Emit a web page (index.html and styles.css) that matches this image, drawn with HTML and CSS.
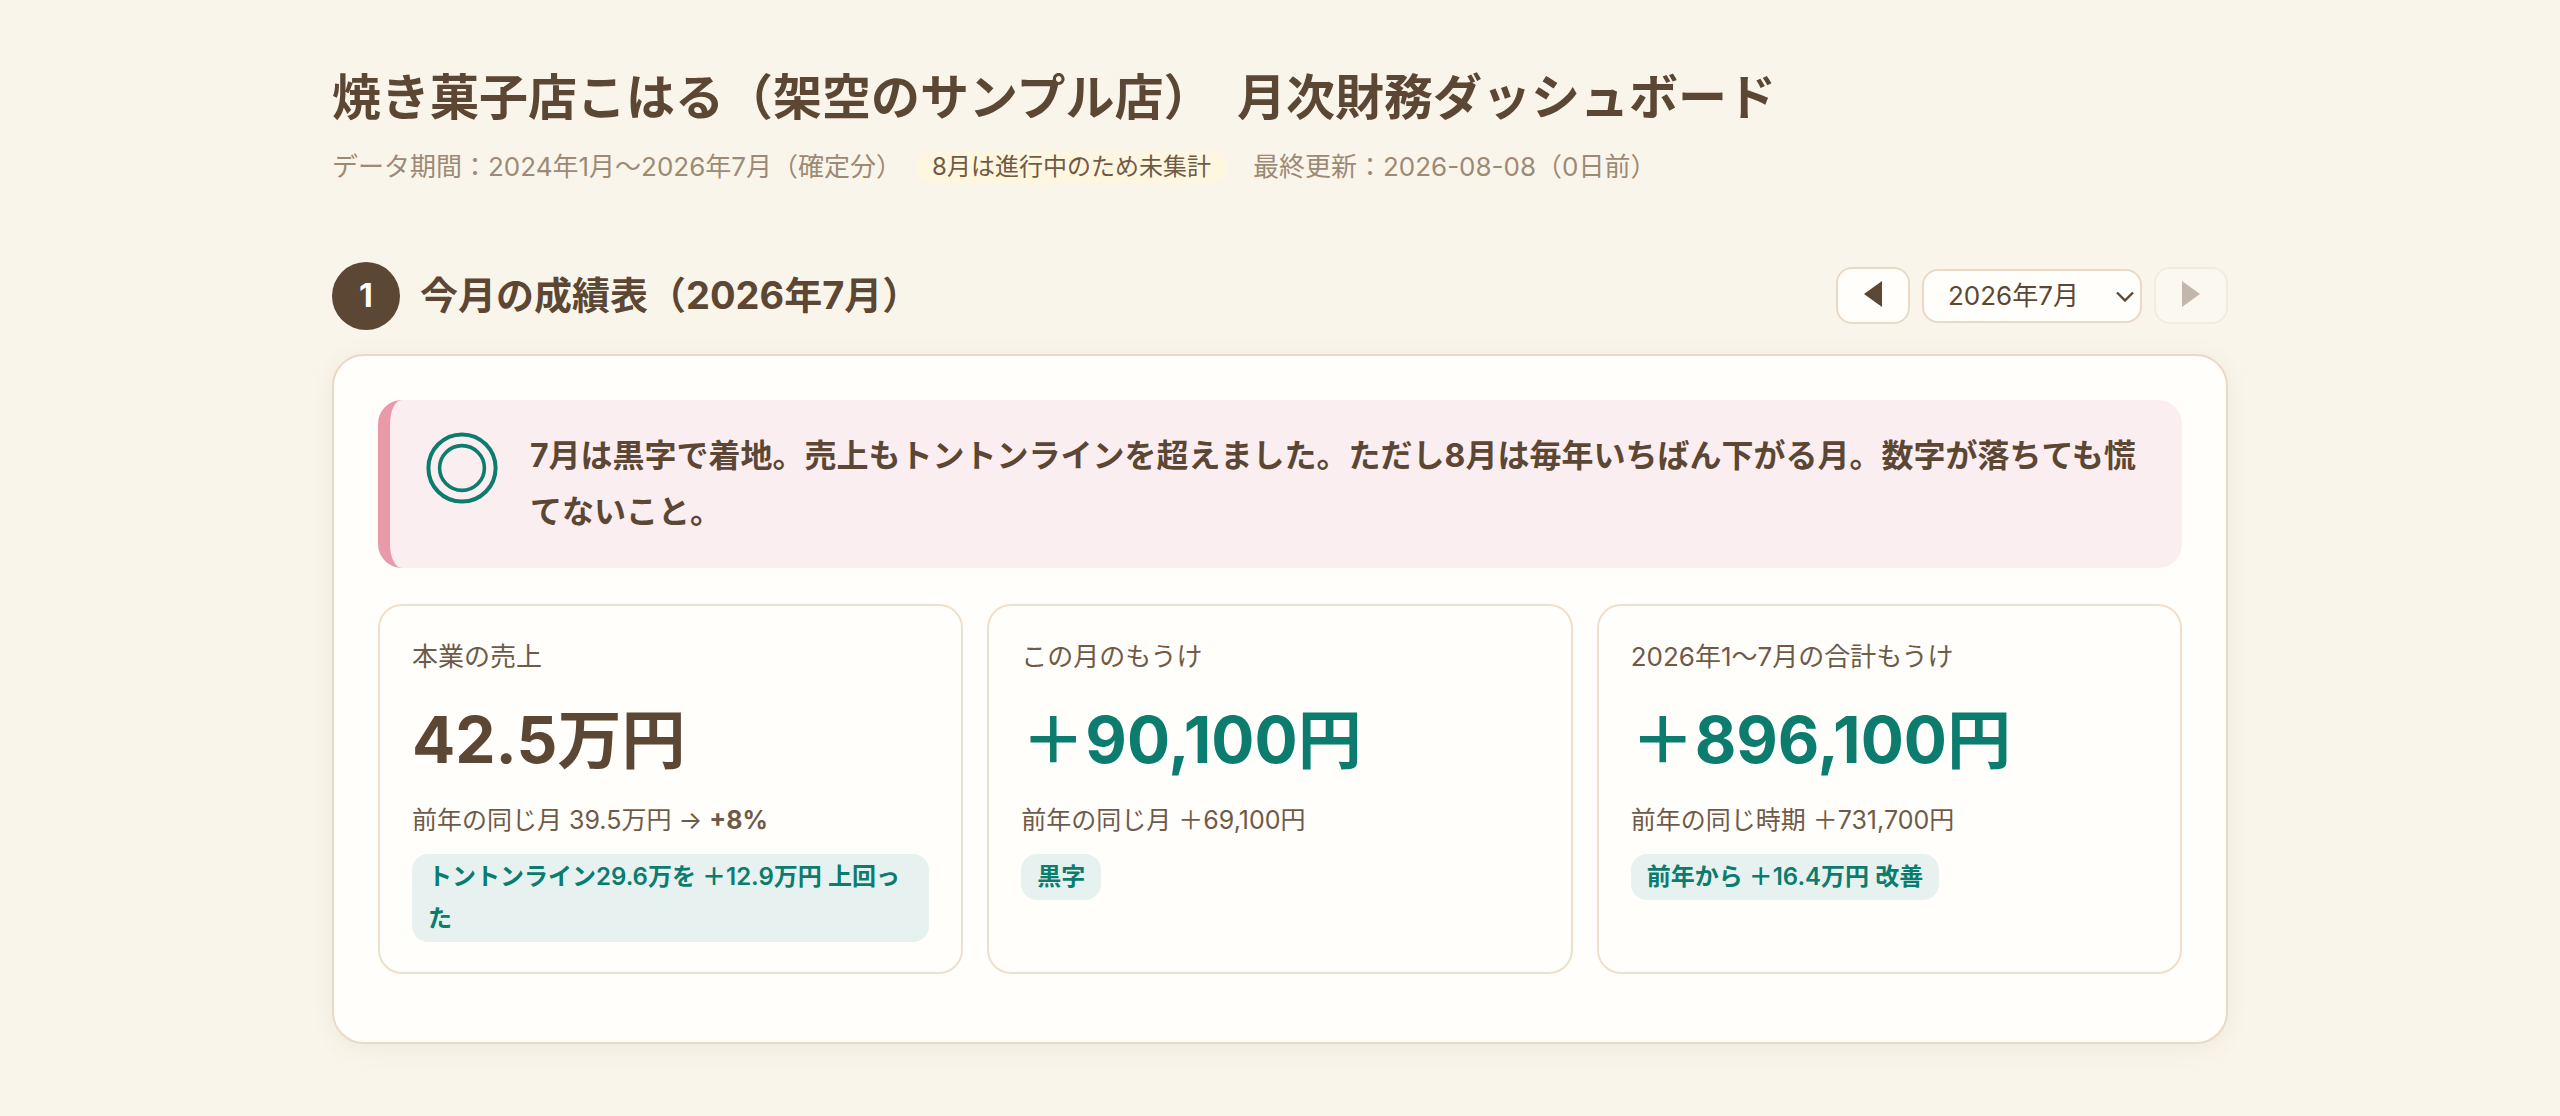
FILE: index.html
```html
<!DOCTYPE html>
<html lang="ja">
<head>
    <meta charset="utf-8">
    <meta name="viewport" content="width=device-width, initial-scale=1">
    <title>月次財務ダッシュボード</title>
    <link rel="stylesheet" href="styles.css">
</head>
<body>
    <div class="container">
        <header class="page-header">
            <h1>焼き菓子店こはる（架空のサンプル店）　月次財務ダッシュボード</h1>
            <div class="meta">
                <span>データ期間：2024年1月〜2026年7月（確定分）</span>
                <span class="note">8月は進行中のため未集計</span>
                <span>最終更新：2026-08-08（0日前）</span>
            </div>
        </header>

        <main>
            <div class="section-head">
                <span class="num">1</span>
                <h2>今月の成績表（2026年7月）</h2>
                <div class="month-nav">
                    <button type="button" class="nav-btn" aria-label="前の月">
                        <svg width="18" height="26" viewBox="0 0 18 26"><path d="M18 0v26L0 13z" fill="currentColor"/></svg>
                    </button>
                    <div class="month-select">
                        <select aria-label="表示する月">
                            <option>2026年7月</option>
                        </select>
                        <svg class="chevron" width="18" height="11" viewBox="0 0 18 11"><path d="M1 1.5l8 8 8-8" fill="none" stroke="currentColor" stroke-width="2.4"/></svg>
                    </div>
                    <button type="button" class="nav-btn" aria-label="次の月" disabled>
                        <svg width="18" height="26" viewBox="0 0 18 26"><path d="M0 0v26l18-13z" fill="currentColor"/></svg>
                    </button>
                </div>
            </div>

            <section class="panel">
                <div class="verdict">
                    <svg class="mark" width="72" height="72" viewBox="0 0 72 72">
                        <circle cx="36" cy="36" r="33.6" fill="none" stroke="currentColor" stroke-width="4"/>
                        <circle cx="36" cy="36" r="22.4" fill="none" stroke="currentColor" stroke-width="3.6"/>
                    </svg>
                    <p>7月は黒字で着地。売上もトントンラインを超えました。ただし8月は毎年いちばん下がる月。数字が落ちても慌てないこと。</p>
                </div>

                <div class="kpis">
                    <div class="kpi">
                        <div class="label">本業の売上</div>
                        <div class="value">42.5万円</div>
                        <div class="sub">前年の同じ月 39.5万円 → <b>+8%</b></div>
                        <span class="badge">トントンライン29.6万を ＋12.9万円 上回った</span>
                    </div>
                    <div class="kpi">
                        <div class="label">この月のもうけ</div>
                        <div class="value good">＋90,100円</div>
                        <div class="sub">前年の同じ月 ＋69,100円</div>
                        <span class="badge">黒字</span>
                    </div>
                    <div class="kpi">
                        <div class="label">2026年1〜7月の合計もうけ</div>
                        <div class="value good">＋896,100円</div>
                        <div class="sub">前年の同じ時期 ＋731,700円</div>
                        <span class="badge">前年から ＋16.4万円 改善</span>
                    </div>
                </div>
            </section>
        </main>
    </div>
</body>
</html>
```
FILE: styles.css
```css
* {
    box-sizing: border-box;
}
body {
    margin: 0;
    background: #faf5ea;
    color: #5c4634;
    font-family: Inter, "Noto Sans CJK JP", sans-serif;
    font-size: 26px;
    line-height: 1.75;
}
h1, h2, p {
    margin: 0;
}
.container {
    max-width: 1960px;
    margin: 0 auto;
    padding: 62px 32px 72px;
}
.page-header {
    margin-bottom: 72px;
}
h1 {
    font-size: 49px;
    line-height: 72px;
    font-weight: bold;
}
.meta {
    display: flex;
    flex-wrap: wrap;
    align-items: center;
    margin-top: 10px;
    color: #9c8a76;
}
.note {
    margin: 0 26px 0 14px;
    padding: 0 16px;
    border-radius: 16px;
    background: #fff6df;
    color: #6f5a48;
    font-size: 24px;
    line-height: 32px;
}

/* 見出しと月の切り替え */
.section-head {
    display: flex;
    align-items: center;
    gap: 20px;
    margin-bottom: 24px;
}
.num {
    display: flex;
    align-items: center;
    justify-content: center;
    width: 68px;
    height: 68px;
    border-radius: 50%;
    background: #5c4634;
    color: #fff;
    font-size: 32px;
    font-weight: bold;
}
h2 {
    padding-bottom: 2px;
    font-size: 38px;
    line-height: 56px;
    font-weight: bold;
}
.month-nav {
    display: flex;
    align-items: center;
    gap: 12px;
    margin-left: auto;
}
.nav-btn {
    display: flex;
    align-items: center;
    justify-content: center;
    width: 74px;
    height: 57px;
    padding: 0 0 4px;
    border: 2px solid #ebd9c5;
    border-radius: 16px;
    background: #fffefa;
    color: #5c4634;
    cursor: pointer;
}
.nav-btn:disabled {
    opacity: 0.35;
    cursor: default;
}
.month-select {
    position: relative;
}
.month-select select {
    display: block;
    width: 220px;
    height: 54px;
    padding: 0 48px 0 24px;
    border: 2px solid #ebd9c5;
    border-radius: 16px;
    background: #fffefa;
    color: #5c4634;
    font-family: inherit;
    font-size: 26px;
    appearance: none;
}
.chevron {
    position: absolute;
    right: 8px;
    top: 22px;
    pointer-events: none;
}

.panel {
    padding: 44px 44px 68px;
    border: 2px solid #ebd9c5;
    border-radius: 32px;
    background: #fffefa;
    box-shadow: 0 4px 24px rgba(92, 70, 52, 0.07);
}
.verdict {
    display: flex;
    align-items: flex-start;
    gap: 32px;
    margin-bottom: 36px;
    padding: 28px 36px;
    border-left: 12px solid #e89aa9;
    border-radius: 24px;
    background: #fbeef1;
    font-size: 32px;
    font-weight: bold;
}
.mark {
    flex: none;
    margin-top: 4px;
    color: #0b7c6d;
}

/* 3つの数字 */
.kpis {
    display: grid;
    grid-template-columns: repeat(3, 1fr);
    gap: 24px;
}
.kpi {
    padding: 28px 32px 30px;
    border: 2px solid #f0dfca;
    border-radius: 24px;
}
.label {
    color: #6f5a48;
    line-height: 46px;
}
.value {
    margin: 20px 0 18px;
    font-size: 64px;
    line-height: 80px;
    font-weight: bold;
}
.good {
    color: #0b7c6d;
}
.sub {
    margin-bottom: 12px;
    color: #6f5a48;
    font-size: 25px;
    line-height: 44px;
}
.badge {
    display: inline-block;
    padding: 2px 16px;
    border-radius: 16px;
    background: #e7f1f0;
    color: #0b7c6d;
    font-size: 24px;
    line-height: 42px;
    font-weight: 600;
    vertical-align: top;
}
@media (max-width: 1200px) {
    .kpis {
        grid-template-columns: 1fr;
    }
    .section-head {
        flex-wrap: wrap;
    }
}
```
